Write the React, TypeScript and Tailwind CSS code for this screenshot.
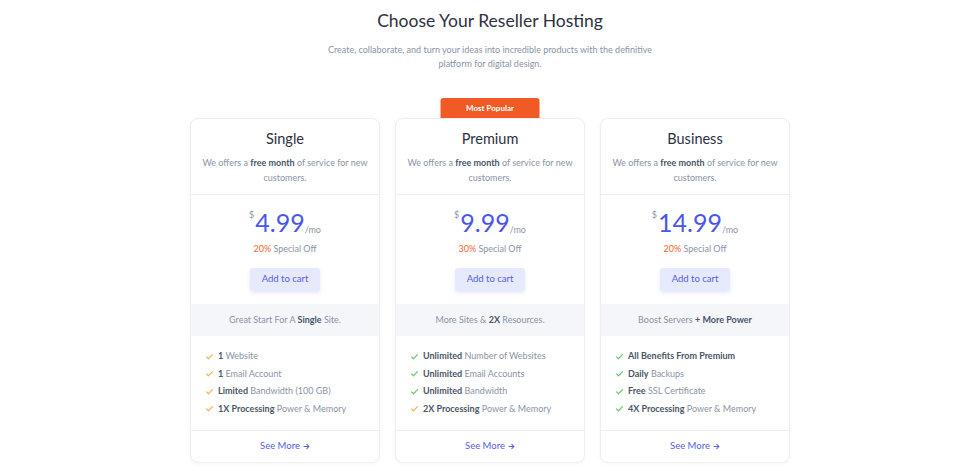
import React from 'react';

type Feature = { bold: string; rest: string; tone: 'orange' | 'green' };

interface Plan {
  name: string;
  price: string;
  off: string;
  tagline: React.ReactNode;
  features: Feature[];
  popular?: boolean;
}

const plans: Plan[] = [
  {
    name: 'Single',
    price: '4.99',
    off: '20%',
    tagline: (
      <>
        Great Start For A <b className="font-bold text-[#4a5568]">Single</b> Site.
      </>
    ),
    features: [
      { bold: '1', rest: ' Website', tone: 'orange' },
      { bold: '1', rest: ' Email Account', tone: 'orange' },
      { bold: 'Limited', rest: ' Bandwidth (100 GB)', tone: 'orange' },
      { bold: '1X Processing', rest: ' Power & Memory', tone: 'orange' },
    ],
  },
  {
    name: 'Premium',
    price: '9.99',
    off: '30%',
    popular: true,
    tagline: (
      <>
        More Sites &amp; <b className="font-bold text-[#4a5568]">2X</b> Resources.
      </>
    ),
    features: [
      { bold: 'Unlimited', rest: ' Number of Websites', tone: 'green' },
      { bold: 'Unlimited', rest: ' Email Accounts', tone: 'green' },
      { bold: 'Unlimited', rest: ' Bandwidth', tone: 'green' },
      { bold: '2X Processing', rest: ' Power & Memory', tone: 'orange' },
    ],
  },
  {
    name: 'Business',
    price: '14.99',
    off: '20%',
    tagline: (
      <>
        Boost Servers <b className="font-bold text-[#4a5568]">+ More Power</b>
      </>
    ),
    features: [
      { bold: 'All Benefits From Premium', rest: '', tone: 'green' },
      { bold: 'Daily', rest: ' Backups', tone: 'green' },
      { bold: 'Free', rest: ' SSL Certificate', tone: 'green' },
      { bold: '4X Processing', rest: ' Power & Memory', tone: 'green' },
    ],
  },
];

const Check: React.FC<{ tone: 'orange' | 'green' }> = ({ tone }) => (
  <svg
    width="9"
    height="9"
    viewBox="0 0 12 12"
    fill="none"
    stroke={tone === 'orange' ? '#f5b25e' : '#6cc47a'}
    strokeWidth="1.6"
    strokeLinecap="round"
    strokeLinejoin="round"
  >
    <path d="M2 6.5l2.6 2.5L10 3.5" />
  </svg>
);

const PlanCard: React.FC<{ plan: Plan }> = ({ plan }) => (
  <div className="relative w-[190px]">
    {plan.popular && (
      <div className="absolute left-1/2 top-[-20px] h-[20px] w-[99px] -translate-x-1/2 rounded-t-[3px] bg-[#f15a24] text-center text-[8px] font-bold leading-[20px] text-white">
        Most Popular
      </div>
    )}
    <div className="relative flex flex-col rounded-[8px] border border-[#eceef2] bg-white shadow-[0_1px_4px_rgba(0,0,0,0.04)]">
      <div className="border-b border-[#eceef2] px-[8px] pb-[9px] pt-[10px] text-center">
        <h3 className="text-[14.5px] leading-[20px] text-[#2d3142]">{plan.name}</h3>
        <p className="mt-[6px] text-[9px] leading-[15px] text-[#8a93a5]">
          We offers a <b className="font-bold text-[#4a5568]">free month</b> of service for new customers.
        </p>
      </div>
      <div className="flex flex-col items-center pb-[13px] pt-[14px]">
        <div className="flex items-start text-[#4a55ee]">
          <span className="mr-[1px] mt-[1px] text-[9px] leading-[10px] text-[#8a93a5]">$</span>
          <span className="text-[25px] leading-[26px]">{plan.price}</span>
          <span className="mt-[16px] text-[9px] leading-[10px] text-[#8a93a5]">/mo</span>
        </div>
        <p className="mt-[8px] text-[9px] leading-[12px] text-[#8a93a5]">
          <span className="text-[#f4642d]">{plan.off}</span> Special Off
        </p>
        <button className="mt-[13px] h-[23px] w-[70px] rounded-[3px] bg-[#e7e9fd] text-[9.5px] text-[#5560e3] shadow-[0_2px_4px_rgba(85,96,227,0.15)]">
          Add to cart
        </button>
      </div>
      <div className="bg-[#f5f6fa] py-[9px] text-center text-[9px] leading-[14px] text-[#8a93a5]">
        {plan.tagline}
      </div>
      <ul className="flex flex-col gap-[5px] border-b border-[#eceef2] pb-[15px] pl-[14px] pt-[14px]">
        {plan.features.map((f, i) => (
          <li key={i} className="flex items-center gap-[4px] text-[9px] leading-[12.5px] text-[#8a93a5]">
            <Check tone={f.tone} />
            <span>
              <b className="font-bold text-[#4a5568]">{f.bold}</b>
              {f.rest}
            </span>
          </li>
        ))}
      </ul>
      <div className="flex h-[31px] items-center justify-center gap-[3px] text-[9.5px] text-[#5560e3]">
        See More
        <svg width="7" height="7" viewBox="0 0 10 10" fill="none" stroke="#5560e3" strokeWidth="1.5" strokeLinecap="round" strokeLinejoin="round">
          <path d="M1.5 5h7M5.5 2l3 3-3 3" />
        </svg>
      </div>
    </div>
  </div>
);

export default function App() {
  return (
    <div className="min-h-[471px] bg-white font-['Lato',sans-serif]">
      <div className="flex flex-col items-center pt-[9px]">
        <h1 className="text-[17.5px] leading-[24px] text-[#2d3142]">Choose Your Reseller Hosting</h1>
        <p className="mt-[10px] w-[330px] text-center text-[9px] leading-[14px] text-[#8a93a5]">
          Create, collaborate, and turn your ideas into incredible products with the definitive platform for digital design.
        </p>
      </div>
      <div className="mt-[47px] flex justify-center gap-[15px]">
        {plans.map((p) => (
          <PlanCard key={p.name} plan={p} />
        ))}
      </div>
    </div>
  );
}
